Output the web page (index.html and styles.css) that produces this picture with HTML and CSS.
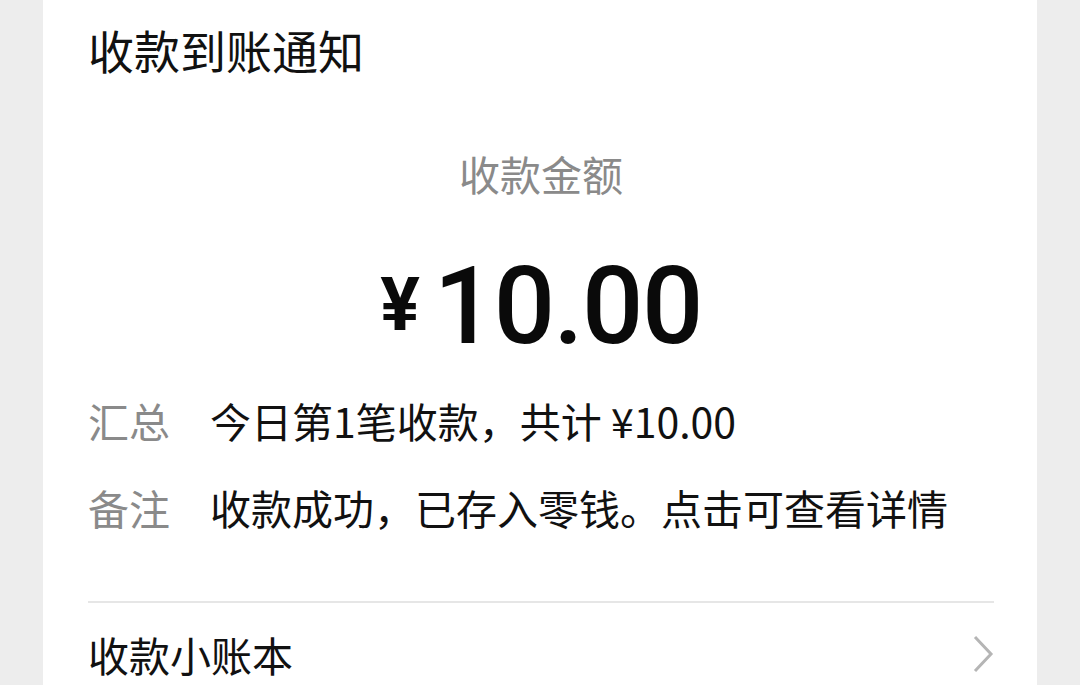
FILE: index.html
```html
<!DOCTYPE html>
<html lang="zh-CN">
<head>
<meta charset="utf-8">
<title>收款到账通知</title>
<link rel="stylesheet" href="styles.css">
</head>
<body>
<div class="card">
  <div class="title">收款到账通知</div>
  <div class="amount-label">收款金额</div>
  <div class="amount"><span class="yen">¥</span><span class="num">10.00</span></div>
  <div class="rows">
    <div class="row"><span class="key">汇总</span><span class="val">今日第1笔收款，共计 ¥10.00</span></div>
    <div class="row"><span class="key">备注</span><span class="val">收款成功，已存入零钱。点击可查看详情</span></div>
  </div>
  <div class="divider"></div>
  <div class="link-row">
    <span class="link-text">收款小账本</span>
    <svg class="chev" width="22" height="38" viewBox="0 0 22 38"><polyline points="3,2 19,19 3,36" fill="none" stroke="#b5b5b5" stroke-width="3"/></svg>
  </div>
</div>
</body>
</html>
```
FILE: styles.css
```css
html, body {
  margin: 0;
  padding: 0;
  background: #ededed;
  height: 685px;
  overflow: hidden;
}
body {
  font-family: "Noto Sans CJK SC", "Noto Sans", sans-serif;
  color: #111;
}
.card {
  margin: 0 43px;
  background: #fff;
  height: 685px;
  padding: 0 43px 0 45px;
  box-sizing: border-box;
}
.title {
  font-size: 46px;
  line-height: 64px;
  padding-top: 17px;
}
.amount-label {
  margin-top: 64px;
  font-size: 41px;
  line-height: 56px;
  color: #8a8a8a;
  text-align: center;
}
.amount {
  margin-top: 45px;
  height: 120px;
  display: flex;
  justify-content: center;
  align-items: center;
  font-family: Roboto, "Noto Sans", sans-serif;
  color: #0a0a0a;
}
.yen {
  font-size: 74px;
  font-weight: 700;
  margin-right: 14px;
  margin-top: -4px;
}
.num {
  font-size: 108px;
  font-weight: 500;
  letter-spacing: -1.5px;
}
.rows {
  margin-top: 26px;
  display: flex;
  flex-direction: column;
  gap: 31px;
}
.row {
  display: flex;
  font-size: 41px;
  line-height: 56px;
}
.key {
  width: 122px;
  flex: none;
  color: #8a8a8a;
}
.divider {
  margin-top: 66px;
  height: 2px;
  background: #e6e6e6;
}
.link-row {
  margin-top: 23px;
  display: flex;
  justify-content: space-between;
  align-items: center;
  font-size: 41px;
  line-height: 56px;
}
```
